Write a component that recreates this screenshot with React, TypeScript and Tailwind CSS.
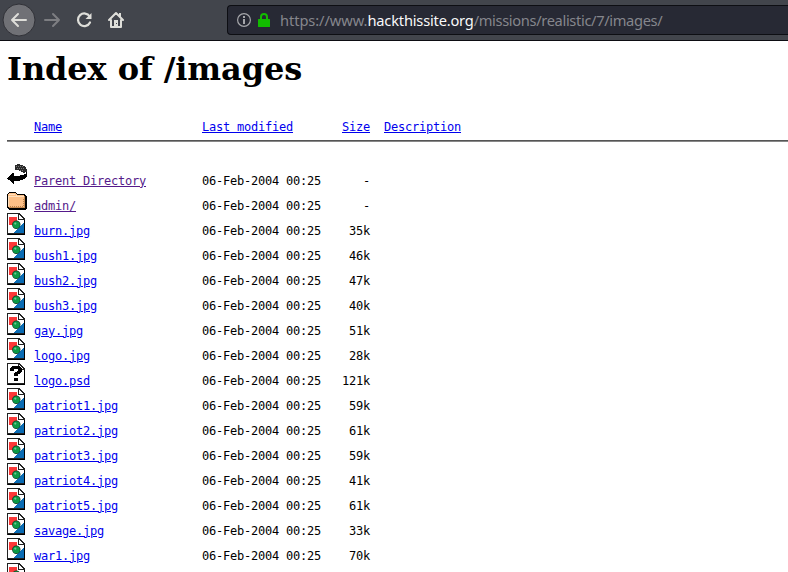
import React from "react";

type Kind = "back" | "folder" | "image" | "unknown";
type Row = { name: string; kind: Kind; size: string; visited?: boolean };

const rows: Row[] = [
  { name: "Parent Directory", kind: "back", size: "-", visited: true },
  { name: "admin/", kind: "folder", size: "-", visited: true },
  { name: "burn.jpg", kind: "image", size: "35k" },
  { name: "bush1.jpg", kind: "image", size: "46k" },
  { name: "bush2.jpg", kind: "image", size: "47k" },
  { name: "bush3.jpg", kind: "image", size: "40k" },
  { name: "gay.jpg", kind: "image", size: "51k" },
  { name: "logo.jpg", kind: "image", size: "28k" },
  { name: "logo.psd", kind: "unknown", size: "121k" },
  { name: "patriot1.jpg", kind: "image", size: "59k" },
  { name: "patriot2.jpg", kind: "image", size: "61k" },
  { name: "patriot3.jpg", kind: "image", size: "59k" },
  { name: "patriot4.jpg", kind: "image", size: "41k" },
  { name: "patriot5.jpg", kind: "image", size: "61k" },
  { name: "savage.jpg", kind: "image", size: "33k" },
  { name: "war1.jpg", kind: "image", size: "70k" },
];

function Page() {
  return (
    <>
      <path d="M0 0h12l6 6v16H0z" fill="#222" />
      <path d="M1 1h10v6h6v13H1z" fill="#fff" />
      <path d="M12 2l4 4h-4z" fill="#fff" />
      <path d="M17 7h1v15H1v-1h16z" fill="#000" />
    </>
  );
}

function FileIcon({ kind }: { kind: Kind }) {
  return (
    <svg width="20" height="22" viewBox="0 0 20 22" shapeRendering="crispEdges" className="block shrink-0">
      {kind === "image" && (
        <>
          <Page />
          <path d="M2 4h8v8H2z" fill="#fb3838" />
          <path d="M17 9v11H7z" fill="#0a6cb4" />
          <g shapeRendering="geometricPrecision">
            <circle cx="9.3" cy="11.8" r="4.2" fill="#123c22" />
            <circle cx="9.3" cy="11.8" r="3.5" fill="#0b9a48" />
            <circle cx="8.3" cy="10.6" r="1.1" fill="#6cc894" />
          </g>
        </>
      )}
      {kind === "unknown" && (
        <>
          <Page />
          <path d="M5 3h8v1h1v1h1v4h-1v1h-1v1h-2v2H7v-3h1V9h2V8h1V6H7v2H3V5h1V4h1zM7 15h4v3H7z" fill="#000" />
        </>
      )}
      {kind === "folder" && (
        <>
          <path d="M0 6h1V5h1V4h7v1h1v1h8v1h1v1h1v13h-1v1H2v-1H1v-1H0z" fill="#000" />
          <path d="M1 6h1V5h7v1h1v1h7v1h1v11h-1v1H2v-1H1z" fill="#fdbf86" />
          <path d="M2 6h6v1H2zM1 8h8V7h1v2H2v9H1zM10 8h7v1h-7z" fill="#ffe0bd" />
          <path d="M17 8h1v12H2v-1h15z" fill="#c78a50" />
          <path d="M3 18h1v1H3zM5 18h1v1H5zM7 18h1v1H7zM9 18h1v1H9zM11 18h1v1h-1zM13 18h1v1h-1zM15 18h1v1h-1zM16 17h1v1h-1zM16 15h1v1h-1zM16 13h1v1h-1zM16 11h1v1h-1z" fill="#b9824c" />
        </>
      )}
      {kind === "back" && (
        <>
          <path d="M8 2h2V1h3v1h3v1h2v1h1v2h1v3h-2v1h-2V9h-2V8h-2V7H8z" fill="#2a2a2a" />
          <path d="M9 3h1v1H9zM11 3h1v1h-1zM13 3h1v1h-1zM15 3h1v1h-1zM10 5h1v1h-1zM12 5h1v1h-1zM14 5h1v1h-1zM16 5h1v1h-1zM13 7h1v1h-1zM15 7h1v1h-1z" fill="#777" />
          <path d="M0 15h1v-1h1v-1h1v-1h1v-1h1v-1h2v3h6v-1h4v-1h2V9h1v5h-1v1h-1v1h-2v1h-3v1H7v3H6v-1H5v-1H4v-1H3v-1H1v-1H0z" fill="#000" />
        </>
      )}
    </svg>
  );
}

function Toolbar() {
  return (
    <header className="flex h-[41px] w-full shrink-0 items-start border-b border-[#0c0c12] bg-[#42454c]">
      <div className="flex h-10 w-[227px] shrink-0 items-center">
        <svg width="140" height="40" viewBox="0 0 140 40" fill="none">
          <circle cx="19" cy="20" r="16" fill="#707176" stroke="#303137" />
          <g stroke="#deded9" strokeWidth="2" strokeLinecap="round" strokeLinejoin="round">
            <path d="M26 20H12M18 14l-6 6 6 6" />
            <path d="M45 20h14M53 14l6 6-6 6" stroke="#7d7e82" />
            <path d="M89.7 16.5a6.3 6.3 0 1 0 .3 6" strokeWidth="2.2" />
            <path d="M109 20l7-7 7 7M111 20v7h10v-7" />
          </g>
          <path d="M91.5 13v6h-6z" fill="#deded9" />
          <path d="M119 13h2v4h-2z" fill="#deded9" />
          <path d="M114 20h4v7h-4z" fill="#deded9" />
          <path d="M116 23h1v1h-1z" fill="#42454c" />
        </svg>
      </div>
      <div className="mt-[5px] flex h-[30px] flex-1 items-center rounded-l-[4px] border border-r-0 border-[#0d0e13] bg-[#272934] pl-[9px]">
        <svg width="36" height="20" viewBox="0 0 36 20" fill="none" className="shrink-0">
          <circle cx="7" cy="10" r="6.4" stroke="#a5a6aa" strokeWidth="1.2" />
          <path d="M6 9h2v5H6zM6 6h2v2H6z" fill="#a5a6aa" />
          <rect x="21" y="9" width="12" height="8" rx=".5" fill="#12bc00" />
          <path d="M24 10V7a3 3 0 0 1 6 0v3" stroke="#12bc00" strokeWidth="2" />
        </svg>
        <span className="ml-[7px] whitespace-pre font-['Noto_Sans',sans-serif] text-[14.67px] leading-5 tracking-[-0.08px] text-[#85868c]">
          https://www.<span className="tracking-[-0.2px] text-[#f9f9fa]">hackthissite.org</span>
          <span className="tracking-[-0.35px]">/missions/realistic/7/images/</span>
        </span>
      </div>
    </header>
  );
}

export default function App() {
  const link = "underline underline-offset-[1px] decoration-1";
  return (
    <div className="flex h-[572px] w-[788px] flex-col overflow-hidden bg-white text-black">
      <Toolbar />
      <main className="flex flex-col pl-[7px] font-['DejaVu_Sans_Mono',monospace] text-[12px] tracking-[-0.224px]">
        <h1 className="mt-[9px] h-[38px] whitespace-nowrap font-['DejaVu_Serif',serif] text-[32px] font-bold leading-[38px] tracking-[-0.09px]">
          Index of /images
        </h1>
        <div className="mt-[31px] flex h-[16px] pl-[27px] leading-4 text-[#0000ee]">
          <div className="w-[168px]"><a className={link}>Name</a></div>
          <div className="w-[140px]"><a className={link}>Last modified</a></div>
          <div className="w-[42px]"><a className={link}>Size</a></div>
          <a className={link}>Description</a>
        </div>
        <div className="mt-[5px] h-[2px] border-t border-[#555] bg-[#888]" />
        <ul className="mt-[21px]">
          {rows.map((r) => (
            <li key={r.name} className="flex h-[25px] items-start">
              <FileIcon kind={r.kind} />
              <div className="ml-[7px] mt-[10px] flex h-4 whitespace-pre leading-4">
                <div className="w-[168px]">
                  <a className={link + (r.visited ? " text-[#551a8b]" : " text-[#0000ee]")}>{r.name}</a>
                </div>
                <div className="w-[126px]">06-Feb-2004 00:25</div>
                <div className="w-[42px] text-right">{r.size}</div>
              </div>
            </li>
          ))}
          <li><FileIcon kind="image" /></li>
        </ul>
      </main>
    </div>
  );
}
